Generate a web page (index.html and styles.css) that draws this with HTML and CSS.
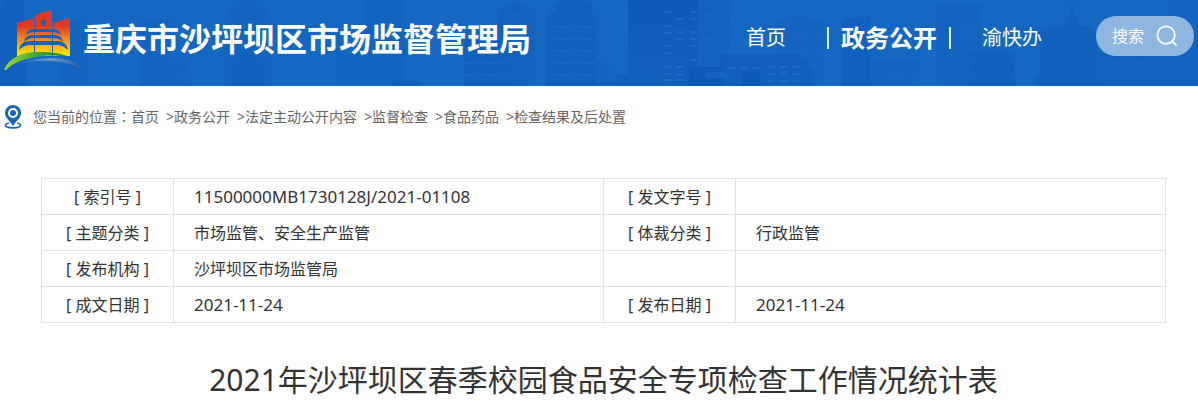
FILE: index.html
```html
<!DOCTYPE html>
<html lang="zh-CN">
<head>
<meta charset="utf-8">
<meta name="viewport" content="width=device-width, initial-scale=1">
<title>2021年沙坪坝区春季校园食品安全专项检查工作情况统计表</title>
<link rel="stylesheet" href="styles.css">
</head>
<body>
<header class="site-header">
  <svg class="skyline" viewBox="0 0 1198 86" preserveAspectRatio="xMinYMin slice" aria-hidden="true">
    <defs>
      <pattern id="windows" width="24" height="12" patternUnits="userSpaceOnUse">
        <path d="M2 3h3M7 3h3M12 3h3M17 3h3" stroke="#2a76c8" stroke-width="2"/>
      </pattern>
      <linearGradient id="tower" x1="0" y1="0" x2="0" y2="1">
        <stop offset="0" stop-color="#0f5ab9"/>
        <stop offset="1" stop-color="#1160bc"/>
      </linearGradient>
    </defs>
    <g fill="#1260bd">
      <path d="M0 8h4V0h20v18h3v68H0z"/>
      <path d="M62 60v-35h8v-6h12v6h6v61H62z" opacity=".5"/>
      <path d="M141 86V20h7v-2h12v2h9v66z" opacity=".4"/>
      <path d="M145 57h45v29h-45z" opacity=".4"/>
      <path d="M225 86V17h4V7h9V0h18v7h12v10h3v69z" opacity=".55"/>
      <path d="M232 61h5v-8h22v8h5v25h-32z"/>
      <path d="M362 0h44v86h-70v-34h26z" opacity=".3"/>
      <path d="M498 86V10l14-8 12 3 11 5v76z" opacity=".6"/>
      <path d="M464 40h46v46h-46z"/>
      <path d="M394 83l14-3 14 3v3h-28z"/>
      <path d="M546 86V16h4v-4h5V2h5V0h28v2h4v13h4v71z"/>
      <path d="M596 60c12 2 17 8 17 26h-17z" opacity=".5"/>
      <path d="M700 0h30v86h-30z" opacity=".6"/>
      <path d="M776 86V21l10-1v-3h25v4h13v65z" opacity=".5"/>
      <path d="M842 86V20l17-3h12v69z"/>
      <path d="M872 60h47v26h-47zM936 6l8-3 38 2v81h-46z" opacity=".5"/>
      <path d="M970 53h10v-2h23v2h12v33h-45z"/>
      <path d="M1035 35q8-9 29-10l7-13 1-11 2 11 6 13q15 2 17 10v39h5v12h-66V74h4V39h-5z"/>
      <path d="M1098 54h51v32h-51zM1168 0h30v86h-50V40h20z" opacity=".6"/>
    </g>
    <path d="M628 0h71v67h20V59h3v-5h78v6h8v7h5v19H603v-4h12v-8h13z" fill="url(#tower)"/>
    <path d="M689 67h35v19h-35zM742 71h18v15h-18z" fill="#0e59b7"/>
    <path d="M705 72h20v6h-20z" fill="#1863bf"/>
    <g stroke="#2471c5" stroke-width="2" opacity=".65">
      <path d="M664 12h7M690 12h7M676 19h7M690 19h7M664 26h7M676 32h7M690 32h7M664 33h7M676 39h7M690 39h7M664 46h7M690 46h7M664 53h7M690 60h7M664 67h7M676 67h7M664 74h7M676 74h7M664 80h7M676 80h7"/>
      <path d="M729 68h7M741 68h7M753 68h7M767 67h7M780 67h7M793 67h7M767 74h7M780 74h7M793 74h7M767 81h7M780 81h7M793 81h7"/>
    </g>
    <g fill="url(#windows)">
      <path opacity=".4" d="M548 18h46v68h-46zM464 56h44v30h-44z"/>
      <path opacity=".2" d="M2 56h23v28H2zM145 60h46v26h-46zM232 66h31v20h-31zM500 12h34v40h-34zM703 0h26v54h-26zM780 28h44v24h-44zM886 66h46v20h-46zM945 18h34v32h-34zM1041 38h52v32h-52zM972 60h42v24h-42zM1104 60h44v26h-44z"/>
    </g>
  </svg>
  <a class="brand" href="#">
    <svg class="brand-logo" viewBox="0 0 80 66" aria-hidden="true">
      <defs>
        <linearGradient id="flame" gradientUnits="userSpaceOnUse" x1="0" y1="5" x2="0" y2="48">
          <stop offset=".35" stop-color="#e23a20"/>
          <stop offset=".65" stop-color="#f08a1c"/>
          <stop offset="1" stop-color="#ffe000"/>
        </linearGradient>
        <linearGradient id="river" x1="0" y1="0" x2="1" y2="0">
          <stop offset="0" stop-color="#2a77c6"/>
          <stop offset=".5" stop-color="#7198cb"/>
          <stop offset="1" stop-color="#255b9d"/>
        </linearGradient>
        <linearGradient id="hill" x1="0" y1="0" x2="1" y2="0">
          <stop offset="0" stop-color="#a5d52a"/>
          <stop offset=".7" stop-color="#199447"/>
        </linearGradient>
      </defs>
      <path d="M14 17l17-5v38H14zM32 9l17-5v46H32zM50 17l17-5v38H50z" fill="url(#flame)"/>
      <ellipse cx="40.500" cy="17" rx="2.300" ry="3.200" fill="#1463bc"/>
      <g fill="#1463bc">
        <path d="M23 29c1-4 4-6 8-6h19c4 0 7 2 8 6-2-2-5-3-8-3H31c-3 0-6 1-8 3z"/>
        <path d="M21 36c1-5 4-7 9-7h21c5 0 8 2 9 7-3-3-6-4-9-4H30c-3 0-6 1-9 4z"/>
        <path d="M16 44c1-6 5-9 11-9h27c6 0 10 3 11 9-4-4-8-5-11-5H27c-3 0-7 1-11 5z"/>
      </g>
      <path d="M1 64C6 52 18 46 35 46c12 0 23 1 32 5-13-2-25-2-34 0C20 53 10 57 3 64z" fill="url(#hill)"/>
      <path d="M15 58c12-4 23-6 34-6 16 0 26 4 31 12-10-6-19-8-30-9-12-1-23 0-35 3z" fill="url(#river)"/>
    </svg>
    <span class="brand-name">重庆市沙坪坝区市场监督管理局</span>
  </a>
  <nav class="main-nav">
    <a class="nav-link" href="#">首页</a>
    <a class="nav-link nav-link-active" href="#">政务公开</a>
    <a class="nav-link" href="#">渝快办</a>
  </nav>
  <button class="search" type="button">
    <span>搜索</span>
    <svg class="search-icon" viewBox="0 0 24 24" aria-hidden="true">
      <circle cx="11" cy="11" r="9.500"/>
      <path d="M17.500 17.500l5 5"/>
    </svg>
  </button>
</header>
<main>
  <nav class="breadcrumb">
    <svg class="pin" viewBox="0 0 18 24" aria-hidden="true">
      <path d="M5 18Q1.500 18.500 1.500 20.500C1.500 22 5 22.800 9 22.800s7.500-.8 7.500-2.300Q16.500 18.500 13 18" fill="none" stroke="#1565bf" stroke-width="1.700"/>
      <path fill="#1565bf" fill-rule="evenodd" d="M9 0a8 8 0 0 1 8 8c0 5-5 8-8 13C6 16 1 13 1 8a8 8 0 0 1 8-8zm0 3a5 5 0 1 0 0 10A5 5 0 0 0 9 3z"/>
      <circle cx="9" cy="8" r="3" fill="#1565bf"/>
    </svg>
    <span>您当前的位置<span class="colon" lang="zh-TW">：</span></span>
    <a class="crumb" href="#">首页</a>
    <a class="crumb" href="#">政务公开</a>
    <a class="crumb" href="#">法定主动公开内容</a>
    <a class="crumb" href="#">监督检查</a>
    <a class="crumb" href="#">食品药品</a>
    <a class="crumb" href="#">检查结果及后处置</a>
  </nav>
  <article class="document">
    <table class="meta">
      <colgroup><col class="col-label"><col><col class="col-label"><col></colgroup>
      <tbody>
        <tr><th scope="row">[ 索引号 ]</th><td class="number">11500000MB1730128J/2021-01108</td><th scope="row">[ 发文字号 ]</th><td></td></tr>
        <tr><th scope="row">[ 主题分类 ]</th><td>市场监管、安全生产监管</td><th scope="row">[ 体裁分类 ]</th><td>行政监管</td></tr>
        <tr><th scope="row">[ 发布机构 ]</th><td>沙坪坝区市场监管局</td><td></td><td></td></tr>
        <tr><th scope="row">[ 成文日期 ]</th><td class="number">2021-11-24</td><th scope="row">[ 发布日期 ]</th><td class="number">2021-11-24</td></tr>
      </tbody>
    </table>
    <h1 class="title">2021年沙坪坝区春季校园食品安全专项检查工作情况统计表</h1>
  </article>
</main>
</body>
</html>
```

FILE: styles.css
```css
* {
  box-sizing: border-box;
}

body {
  margin: 0;
  background: #fff;
  color: #333;
  font-family: "Noto Sans", "Noto Sans CJK SC", sans-serif;
  font-size: 16px;
  line-height: 24px;
}

a {
  color: inherit;
  text-decoration: none;
}

.site-header {
  position: relative;
  display: flex;
  align-items: center;
  min-height: 86px;
  padding: 0 4px 0 3px;
  background: #1468c1;
  color: #fff;
}

.skyline {
  position: absolute;
  inset: 0;
  width: 100%;
  height: 100%;
}

.brand,
.main-nav,
.search {
  position: relative;
}

.brand {
  display: flex;
  align-items: center;
  flex: none;
  padding-bottom: 8px;
}

.brand-logo {
  width: 80px;
  height: 66px;
}

.brand-name {
  font-size: 32px;
  font-weight: 700;
  line-height: 48px;
}

.main-nav {
  display: flex;
  align-items: center;
  flex: none;
  margin-left: auto;
  padding-bottom: 10px;
}

.nav-link {
  font-size: 20px;
  line-height: 32px;
}

.nav-link-active {
  display: flex;
  align-items: center;
  gap: 12px;
  margin: 0 31px 0 41px;
  font-size: 24px;
  font-weight: 700;
}

.nav-link-active::before,
.nav-link-active::after {
  width: 2px;
  height: 22px;
  background: #e4eef9;
  content: "";
}

.search {
  display: flex;
  align-items: center;
  justify-content: space-between;
  flex: none;
  width: 98px;
  height: 40px;
  margin: 0 0 14px 54px;
  padding: 0 16px;
  border: 0;
  border-radius: 20px;
  background: #8fb6e1;
  color: #fff;
  font: inherit;
}

.search-icon {
  width: 22px;
  height: 22px;
  fill: none;
  stroke: #fff;
  stroke-width: 2;
}

.breadcrumb {
  display: flex;
  align-items: center;
  flex-wrap: wrap;
  padding: 18px 4px 19px;
  color: #666;
  font-size: 14px;
}

.pin {
  width: 18px;
  height: 24px;
  margin-right: 11px;
}

.colon {
  font-family: "Noto Sans CJK TC", sans-serif;
}

.crumb + .crumb::before {
  margin-left: 7px;
  content: ">";
}

.document {
  padding: 30px 32px 0 41px;
}

.meta {
  width: 100%;
  border-collapse: collapse;
  table-layout: fixed;
}

.col-label {
  width: 132px;
}

.meta th,
.meta td {
  height: 36px;
  padding: 0 20px;
  border: 1px solid #e3e3e3;
  font-weight: 400;
  text-align: left;
}

.meta th {
  padding: 0;
  text-align: center;
}

.meta .number {
  font-size: 17px;
}

.title {
  margin: 33px 0 0;
  font-size: 30px;
  font-weight: 400;
  line-height: 48px;
  text-align: center;
}
```
